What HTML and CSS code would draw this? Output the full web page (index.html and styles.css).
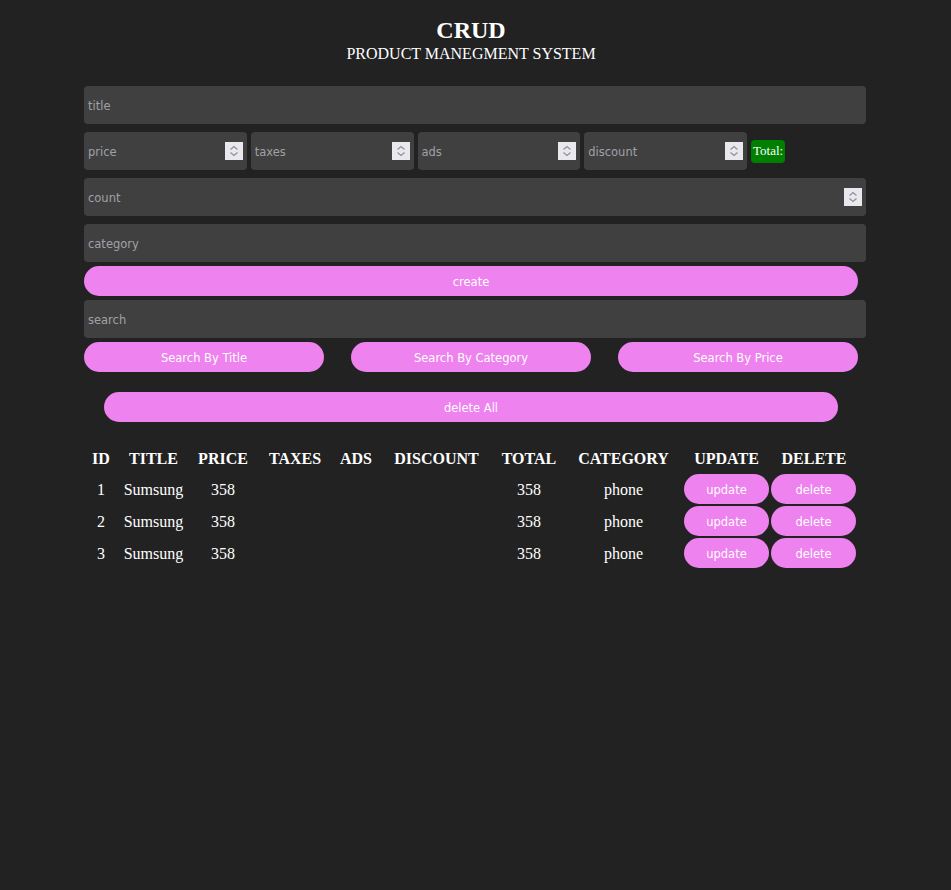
FILE: index.html
```html
<!DOCTYPE html>
<html lang="en">
<head>
<meta charset="utf-8">
<title>CRUD</title>
<link rel="stylesheet" href="styles.css">
</head>
<body>
<div class="crud">
  <div class="head">
    <h2 class="head-title">CRUD</h2>
    <p class="head-sub">PRODUCT MANEGMENT SYSTEM</p>
  </div>
  <div class="inputs">
    <input class="field" type="text" placeholder="title">
    <div class="price">
      <div class="num small"><input type="text" placeholder="price"><svg class="spin" viewBox="0 0 18 18" width="18" height="18"><rect width="18" height="18" fill="#e9e9ed"/><path d="M5.5 7.5 L9 4.5 L12.5 7.5 M5.5 10.5 L9 13.5 L12.5 10.5" fill="none" stroke="#8f8f9d" stroke-width="1.2"/></svg></div>
      <div class="num small"><input type="text" placeholder="taxes"><svg class="spin" viewBox="0 0 18 18" width="18" height="18"><rect width="18" height="18" fill="#e9e9ed"/><path d="M5.5 7.5 L9 4.5 L12.5 7.5 M5.5 10.5 L9 13.5 L12.5 10.5" fill="none" stroke="#8f8f9d" stroke-width="1.2"/></svg></div>
      <div class="num small"><input type="text" placeholder="ads"><svg class="spin" viewBox="0 0 18 18" width="18" height="18"><rect width="18" height="18" fill="#e9e9ed"/><path d="M5.5 7.5 L9 4.5 L12.5 7.5 M5.5 10.5 L9 13.5 L12.5 10.5" fill="none" stroke="#8f8f9d" stroke-width="1.2"/></svg></div>
      <div class="num small"><input type="text" placeholder="discount"><svg class="spin" viewBox="0 0 18 18" width="18" height="18"><rect width="18" height="18" fill="#e9e9ed"/><path d="M5.5 7.5 L9 4.5 L12.5 7.5 M5.5 10.5 L9 13.5 L12.5 10.5" fill="none" stroke="#8f8f9d" stroke-width="1.2"/></svg></div>
      <small class="total">Total:</small>
    </div>
    <div class="num"><input type="text" placeholder="count"><svg class="spin" viewBox="0 0 18 18" width="18" height="18"><rect width="18" height="18" fill="#e9e9ed"/><path d="M5.5 7.5 L9 4.5 L12.5 7.5 M5.5 10.5 L9 13.5 L12.5 10.5" fill="none" stroke="#8f8f9d" stroke-width="1.2"/></svg></div>
    <input class="field" type="text" placeholder="category">
  </div>
  <button class="btn btn-create">create</button>
  <input class="field field-search" type="text" placeholder="search">
  <div class="search-btns">
    <button class="btn btn-search">Search By Title</button>
    <button class="btn btn-search">Search By Category</button>
    <button class="btn btn-search">Search By Price</button>
  </div>
  <button class="btn btn-delall">delete All</button>
  <table class="tbl">
    <colgroup>
      <col class="c-id"><col class="c-title"><col class="c-price"><col class="c-taxes"><col class="c-ads"><col class="c-disc"><col class="c-total"><col class="c-cat"><col class="c-up"><col class="c-del">
    </colgroup>
    <thead>
      <tr><th>ID</th><th>TITLE</th><th>PRICE</th><th>TAXES</th><th>ADS</th><th>DISCOUNT</th><th>TOTAL</th><th>CATEGORY</th><th>UPDATE</th><th>DELETE</th></tr>
    </thead>
    <tbody>
      <tr><td>1</td><td>Sumsung</td><td>358</td><td></td><td></td><td></td><td>358</td><td>phone</td><td class="act"><button class="btn btn-row">update</button></td><td class="act"><button class="btn btn-row">delete</button></td></tr>
      <tr><td>2</td><td>Sumsung</td><td>358</td><td></td><td></td><td></td><td>358</td><td>phone</td><td class="act"><button class="btn btn-row">update</button></td><td class="act"><button class="btn btn-row">delete</button></td></tr>
      <tr><td>3</td><td>Sumsung</td><td>358</td><td></td><td></td><td></td><td>358</td><td>phone</td><td class="act"><button class="btn btn-row">update</button></td><td class="act"><button class="btn btn-row">delete</button></td></tr>
    </tbody>
  </table>
</div>
</body>
</html>
```

FILE: styles.css
```css
* { box-sizing: border-box; }

html, body {
  margin: 0;
  background: #222222;
}

body {
  color: #ffffff;
  font-family: "Liberation Serif", "Times New Roman", serif;
}

.crud {
  width: 774px;
  margin-left: 84px;
  padding-top: 17px;
}

.head {
  text-align: center;
}

.head-title {
  margin: 0;
  font-size: 24px;
  font-weight: bold;
  line-height: normal;
}

.head-sub {
  margin: 1px 0 0;
  font-size: 16px;
  line-height: normal;
}

.inputs {
  display: flex;
  flex-direction: column;
  gap: 8px;
  margin-top: 23px;
  width: 782px;
}

.field,
.num {
  width: 782px;
  height: 38px;
  background: #404040;
  border: none;
  border-radius: 4px;
  outline: none;
  color: #ffffff;
  font-family: "DejaVu Sans", "Noto Sans", sans-serif;
  font-size: 11.5px;
  padding: 2px 4px 0;
}

.num {
  display: flex;
  align-items: center;
  gap: 4px;
  padding: 0 4px;
}

.num input {
  flex: 1;
  min-width: 0;
  height: 30px;
  background: transparent;
  border: none;
  outline: none;
  padding: 2px 0 0;
  color: #ffffff;
  font: inherit;
}

.field::placeholder,
.num input::placeholder {
  color: #a0a0a8;
}

.spin {
  display: block;
  flex: none;
}

.price {
  display: flex;
  align-items: center;
  gap: 4px;
}

.num.small {
  width: 162.75px;
}

.total {
  display: block;
  background: #008000;
  color: #ffffff;
  border-radius: 4px;
  font-size: 13px;
  padding: 3px 2px 4px;
  line-height: normal;
}

.btn {
  display: block;
  border: none;
  background: #ee82ee;
  color: #ffffff;
  height: 30px;
  border-radius: 15px;
  font-family: "DejaVu Sans", "Noto Sans", sans-serif;
  font-size: 11.5px;
  padding: 2px 0 0;
  cursor: pointer;
}

.btn-create {
  width: 774px;
  margin-top: 4px;
}

.field-search {
  display: block;
  margin-top: 4px;
}

.search-btns {
  display: flex;
  justify-content: space-between;
  margin-top: 4px;
}

.btn-search {
  width: 240px;
}

.btn-delall {
  width: 734px;
  margin: 20px 20px 0;
}

.tbl {
  width: 774px;
  table-layout: fixed;
  border-collapse: separate;
  border-spacing: 0;
  margin-top: 26px;
  font-size: 16px;
}

.tbl th {
  padding: 2px 1px 5px;
  font-weight: bold;
  text-align: center;
}

.tbl td {
  padding: 3px 1px 1px;
  text-align: center;
}

.tbl td.act {
  padding: 1px;
}

.c-id { width: 34px; }
.c-title { width: 71px; }
.c-price { width: 68px; }
.c-taxes { width: 76px; }
.c-ads { width: 46px; }
.c-disc { width: 115px; }
.c-total { width: 70px; }
.c-cat { width: 119px; }
.c-up { width: 87px; }
.c-del { width: 88px; }

.btn-row {
  width: 85px;
}
```
